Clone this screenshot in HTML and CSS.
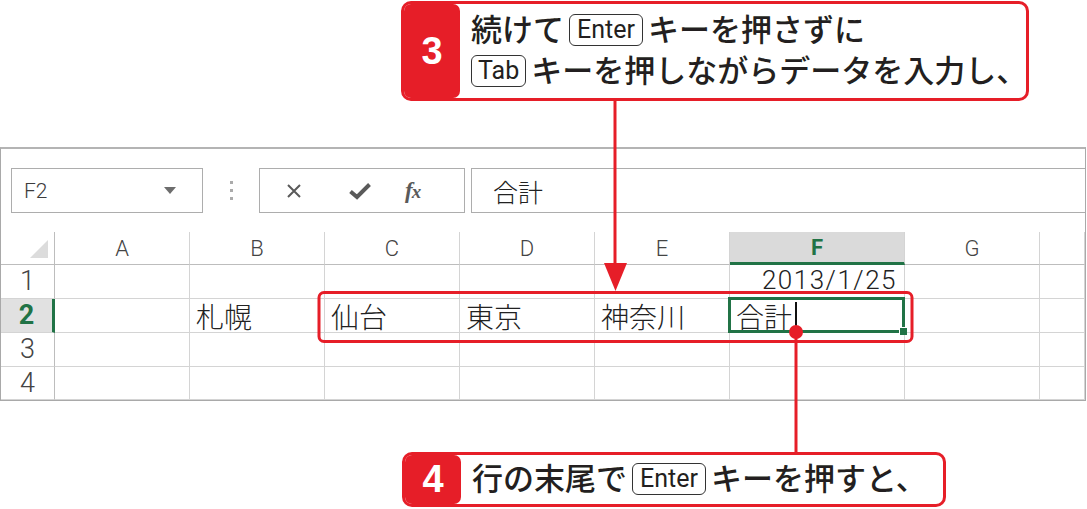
FILE: index.html
```html
<!DOCTYPE html>
<html lang="ja">
<head>
<meta charset="utf-8">
<title>Excel入力</title>
<link rel="stylesheet" href="styles.css">
</head>
<body>
<div class="page">
  <div class="callout callout-top">
    <div class="badge">3</div>
    <div class="ctext">
      <div class="line">続けて<span class="key">Enter</span>キーを押さずに</div>
      <div class="line"><span class="key lead">Tab</span>キーを押しながらデータを入力し、</div>
    </div>
  </div>

  <div class="sheet">
    <div class="fbar">
      <div class="namebox">
        <span class="name">F2</span>
        <svg class="dd" width="12" height="7" viewBox="0 0 12 7"><path d="M0 0H12L6 7Z" fill="#6d6d6d"/></svg>
      </div>
      <div class="dots"><i></i><i></i><i></i></div>
      <div class="fnbox">
        <svg class="ic" width="16" height="16" viewBox="0 0 16 16"><path d="M2 2L14 14M14 2L2 14" stroke="#5a5a5a" stroke-width="2" fill="none"/></svg>
        <svg class="ic" width="24" height="20" viewBox="0 0 24 20"><path d="M2.5 10.5L9 16L21.5 3.5" stroke="#5a5a5a" stroke-width="4" fill="none"/></svg>
        <span class="fx">f<span class="fxx">x</span></span>
      </div>
      <div class="formula">合計</div>
    </div>

    <div class="grid">
      <div class="h corner"><span class="tri"></span></div>
      <div class="h col">A</div>
      <div class="h col">B</div>
      <div class="h col">C</div>
      <div class="h col">D</div>
      <div class="h col">E</div>
      <div class="h col sel">F</div>
      <div class="h col">G</div>
      <div class="h col"></div>

      <div class="rh">1</div>
      <div class="c"></div><div class="c"></div><div class="c"></div><div class="c"></div><div class="c"></div>
      <div class="c num">2013/1/25</div>
      <div class="c"></div><div class="c"></div>

      <div class="rh sel">2</div>
      <div class="c"></div>
      <div class="c">札幌</div>
      <div class="c">仙台</div>
      <div class="c">東京</div>
      <div class="c">神奈川</div>
      <div class="c active">合計<span class="caret"></span><span class="handle"></span></div>
      <div class="c"></div><div class="c"></div>

      <div class="rh">3</div>
      <div class="c"></div><div class="c"></div><div class="c"></div><div class="c"></div><div class="c"></div><div class="c"></div><div class="c"></div><div class="c"></div>

      <div class="rh">4</div>
      <div class="c"></div><div class="c"></div><div class="c"></div><div class="c"></div><div class="c"></div><div class="c"></div><div class="c"></div><div class="c"></div>
    </div>
  </div>

  <div class="callout callout-bottom">
    <div class="badge">4</div>
    <div class="ctext single">行の末尾で<span class="key">Enter</span>キーを押すと、</div>
  </div>

  <svg class="overlay" width="1087" height="509" viewBox="0 0 1087 509">
    <line x1="615" y1="100" x2="615" y2="268" stroke="#e61e28" stroke-width="3"/>
    <path d="M604 263H627L615.5 291Z" fill="#e61e28"/>
    <rect x="319" y="292.5" width="593" height="49" rx="5" fill="none" stroke="#e61e28" stroke-width="3"/>
    <line x1="796" y1="332" x2="796" y2="453" stroke="#e61e28" stroke-width="3"/>
    <circle cx="796" cy="332" r="7" fill="#e61e28"/>
  </svg>
</div>
</body>
</html>
```

FILE: styles.css
```css
body {
  margin: 0;
  background: #fff;
  font-family: "Noto Sans CJK JP", "Noto Sans", sans-serif;
}

.page {
  position: relative;
  width: 1087px;
  height: 509px;
  overflow: hidden;
  display: flex;
  flex-direction: column;
}

/* ---------- callouts ---------- */
.callout {
  display: flex;
  box-sizing: border-box;
  border: 3px solid #e61e28;
  border-radius: 10px;
  background: #fff;
  overflow: hidden;
}

.callout-top {
  margin: 1px 0 0 401px;
  width: 628px;
  height: 100px;
}

.callout-bottom {
  margin: 51px 0 0 402px;
  width: 544px;
  height: 55px;
}

.badge {
  flex: none;
  width: 56px;
  background: #e61e28;
  color: #fff;
  font-family: "Liberation Sans", Arial, sans-serif;
  font-weight: 700;
  font-size: 38px;
  display: flex;
  align-items: center;
  justify-content: center;
  border-radius: 0 7px 7px 0;
}

.ctext {
  padding: 3px 0 0 11px;
  font-size: 31px;
  font-weight: 500;
  color: #231f20;
  line-height: 41px;
  white-space: nowrap;
}

.ctext.single {
  padding-top: 2px;
  line-height: 40px;
}

.key {
  display: inline-block;
  box-sizing: border-box;
  height: 32px;
  border: 1.5px solid #333;
  border-radius: 6px;
  padding: 0 7px;
  margin: 0 5px 0 5px;
  font-family: Roboto, "Liberation Sans", sans-serif;
  font-weight: 400;
  font-size: 25px;
  line-height: 29px;
  vertical-align: 3px;
}

.key.lead {
  margin-left: 0;
  padding: 0 6px;
}

/* ---------- spreadsheet ---------- */
.sheet {
  margin-top: 46px;
  width: 1086px;
  box-sizing: border-box;
  border: 1px solid #a9a9a9;
  border-top: 2px solid #b4b4b4;
}

.fbar {
  display: flex;
  height: 45px;
  padding: 19px 0 0 10px;
}

.namebox {
  box-sizing: border-box;
  width: 192px;
  border: 1px solid #adadad;
  display: flex;
  align-items: center;
  justify-content: space-between;
  padding: 0 26px 0 12px;
}

.name {
  font-family: Roboto, "Noto Sans", sans-serif;
  font-weight: 300;
  font-size: 21px;
  color: #3c3c3c;
}

.dots {
  width: 56px;
  display: flex;
  flex-direction: column;
  align-items: center;
  justify-content: center;
  gap: 5px;
}

.dots i {
  width: 3px;
  height: 3px;
  background: #ababab;
}

.fnbox {
  box-sizing: border-box;
  width: 206px;
  border: 1px solid #adadad;
  display: flex;
  align-items: center;
  padding: 0 0 0 26px;
}

.fnbox .ic:first-child { margin-right: 46px; }
.fnbox .ic:nth-child(2) { margin-right: 33px; }

.fx {
  font-family: "Liberation Serif", serif;
  font-style: italic;
  font-weight: 700;
  font-size: 23px;
  color: #5a5a5a;
  letter-spacing: -1px;
}

.fxx {
  font-size: 19px;
}

.formula {
  flex: 1;
  margin-left: 6px;
  box-sizing: border-box;
  border: 1px solid #adadad;
  border-right: none;
  display: flex;
  align-items: center;
  padding-left: 21px;
  font-size: 25px;
  font-weight: 300;
  color: #222;
}

.grid {
  margin-top: 19px;
  display: grid;
  grid-template-columns: 54px 135px 135px 135px 135px 135px 175px 135px 1fr;
  grid-template-rows: 33px 34px 34px 34px 33px;
}

.grid > div {
  box-sizing: border-box;
  border-right: 1px solid #d4d4d4;
  border-bottom: 1px solid #d4d4d4;
}

.h {
  display: flex;
  align-items: center;
  justify-content: center;
  font-family: Roboto, "Noto Sans", sans-serif;
  font-size: 22px;
  font-weight: 300;
  color: #444;
  border-bottom-color: #bdbdbd !important;
}

.corner {
  position: relative;
  border-right-color: #bdbdbd !important;
}

.tri {
  position: absolute;
  right: 6px;
  bottom: 6px;
  width: 0;
  height: 0;
  border-left: 18px solid transparent;
  border-bottom: 18px solid #dcdcdc;
}

.h.sel {
  background: #dadada;
  color: #217346;
  font-weight: 700;
  border-bottom: 3px solid #217346 !important;
}

.rh {
  display: flex;
  align-items: center;
  justify-content: center;
  font-family: Roboto, "Noto Sans", sans-serif;
  font-size: 27px;
  font-weight: 300;
  color: #444;
  line-height: 1;
  border-right-color: #bdbdbd !important;
}

.rh.sel {
  background: #e1e1e1;
  color: #217346;
  font-weight: 700;
  border-right: 3px solid #217346 !important;
}

.c {
  position: relative;
  display: flex;
  align-items: flex-end;
  padding: 0 5px 2px 6px;
  font-size: 28px;
  font-weight: 300;
  line-height: 1;
  color: #222;
  white-space: nowrap;
}

.c.num {
  justify-content: flex-end;
  padding-right: 7px;
  padding-bottom: 5px;
  font-family: Roboto, "Noto Sans", sans-serif;
  font-size: 26px;
  letter-spacing: 1.5px;
}

.c.active::after {
  content: "";
  position: absolute;
  left: -2px;
  top: -2px;
  right: -1px;
  bottom: -1px;
  border: 3px solid #217346;
}

.caret {
  display: inline-block;
  width: 1.5px;
  height: 28px;
  margin-left: 3px;
  background: #111;
  align-self: flex-end;
}

.handle {
  position: absolute;
  right: -3px;
  bottom: -3px;
  width: 7px;
  height: 7px;
  background: #217346;
  border-left: 1px solid #fff;
  border-top: 1px solid #fff;
  z-index: 2;
}

/* ---------- connectors ---------- */
.overlay {
  position: absolute;
  left: 0;
  top: 0;
  pointer-events: none;
}
```
